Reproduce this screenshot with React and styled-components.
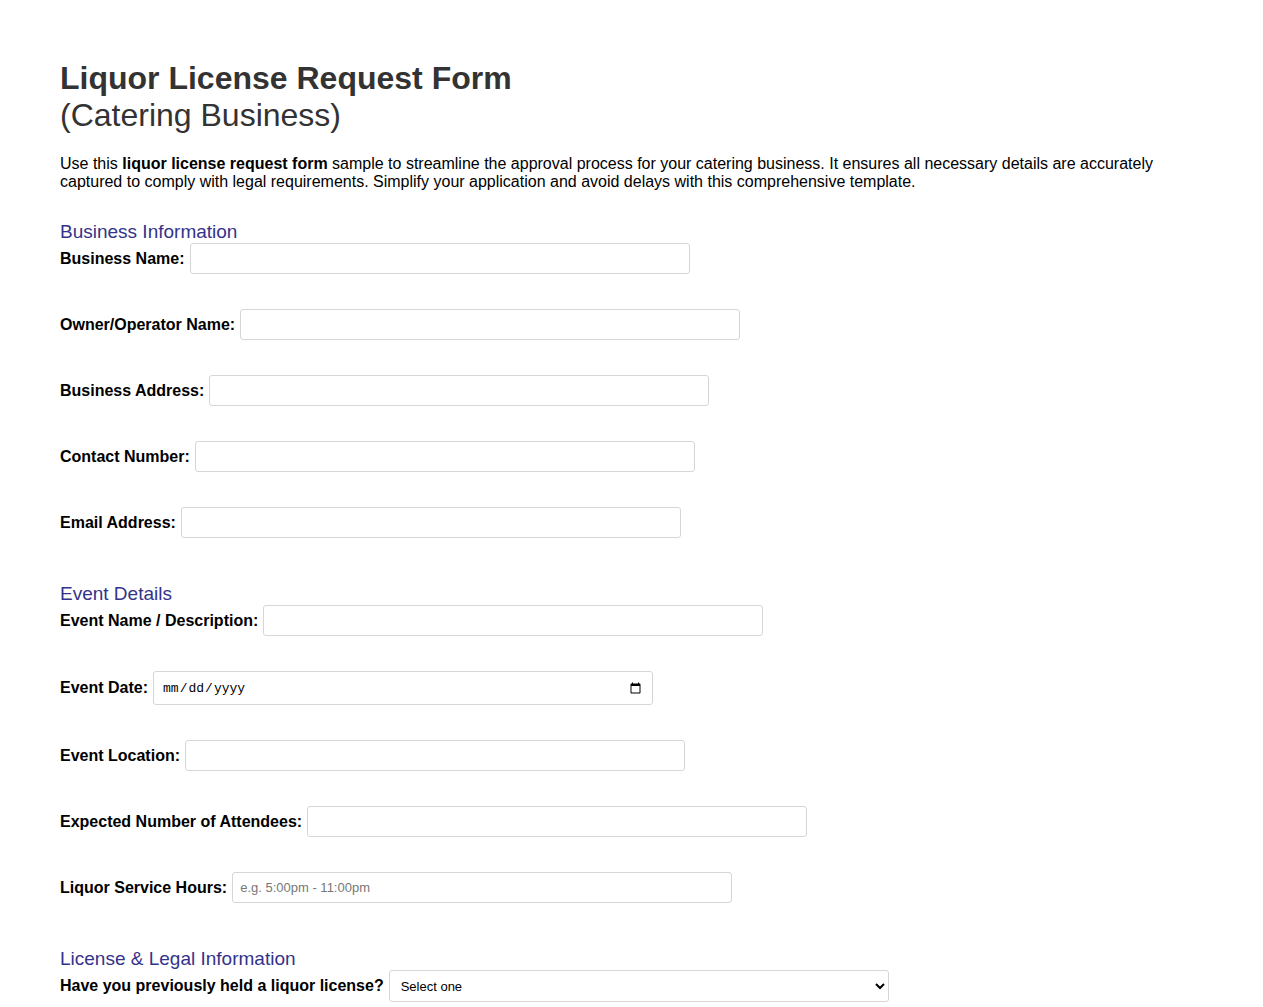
import React from "react";
import styled, { createGlobalStyle } from "styled-components";

const GlobalStyle = createGlobalStyle`
  html, body {
    margin: 0;
    padding: 0;
    background: #fff;
  }
  body {
    font-family: "Liberation Sans", Arial, sans-serif;
    color: #000;
  }
`;

const Page = styled.div`
  padding: 60px 60px 40px;
`;

const Title = styled.h1`
  margin: 0;
  font-size: 32px;
  line-height: 37px;
  font-weight: bold;
  color: #333;
  span {
    display: block;
    font-weight: normal;
  }
`;

const Intro = styled.p`
  margin: 21px 0 0;
  font-size: 16px;
  line-height: 18px;
`;

// margin-top collapses with the previous row's 35px bottom margin
const Section = styled.section`
  margin-top: ${(p) => p.$top || 0}px;
`;

const SectionTitle = styled.h2`
  margin: 0;
  font-size: 19px;
  line-height: 23px;
  font-weight: normal;
  color: #33338a;
`;

const Row = styled.div`
  display: flex;
  align-items: center;
  margin-bottom: 35px;
`;

const Label = styled.label`
  font-size: 16px;
  line-height: 18px;
  font-weight: bold;
  margin-right: 5px;
  white-space: nowrap;
`;

const Input = styled.input`
  box-sizing: border-box;
  width: 500px;
  height: ${(p) => (p.type === "date" ? 34 : 31)}px;
  padding: 0 ${(p) => (p.type === "date" ? 8 : 7)}px;
  border: 1px solid #d6d6d6;
  border-radius: 3px;
  font-size: 13px;
  font-family: ${(p) =>
    p.type === "date"
      ? `"Liberation Mono", "DejaVu Sans Mono", monospace`
      : `"Liberation Sans", Arial, sans-serif`};
  background: #fff;
  &::placeholder {
    color: #777;
  }
`;

const Select = styled.select`
  box-sizing: border-box;
  width: 500px;
  height: 32px;
  padding: 0 7px;
  border: 1px solid #d6d6d6;
  border-radius: 3px;
  font-size: 13px;
  font-family: "Liberation Sans", Arial, sans-serif;
  background: #fff;
  color: #000;
`;

function Field({ label, children }) {
  return (
    <Row>
      <Label>{label}</Label>
      {children}
    </Row>
  );
}

export default function App() {
  return (
    <Page>
      <GlobalStyle />
      <Title>
        Liquor License Request Form
        <span>(Catering Business)</span>
      </Title>
      <Intro>
        Use this <b>liquor license request form</b> sample to streamline the
        approval process for your catering business. It ensures all necessary
        details are accurately captured to comply with legal requirements.
        Simplify your application and avoid delays with this comprehensive
        template.
      </Intro>

      <Section $top={29}>
        <SectionTitle>Business Information</SectionTitle>
        <Field label="Business Name:">
          <Input type="text" />
        </Field>
        <Field label="Owner/Operator Name:">
          <Input type="text" />
        </Field>
        <Field label="Business Address:">
          <Input type="text" />
        </Field>
        <Field label="Contact Number:">
          <Input type="tel" />
        </Field>
        <Field label="Email Address:">
          <Input type="email" />
        </Field>
      </Section>

      <Section $top={44}>
        <SectionTitle>Event Details</SectionTitle>
        <Field label="Event Name / Description:">
          <Input type="text" />
        </Field>
        <Field label="Event Date:">
          <Input type="date" />
        </Field>
        <Field label="Event Location:">
          <Input type="text" />
        </Field>
        <Field label="Expected Number of Attendees:">
          <Input type="number" />
        </Field>
        <Field label="Liquor Service Hours:">
          <Input type="text" placeholder="e.g. 5:00pm - 11:00pm" />
        </Field>
      </Section>

      <Section $top={44}>
        <SectionTitle>License &amp; Legal Information</SectionTitle>
        <Field label="Have you previously held a liquor license?">
          <Select defaultValue="">
            <option value="">Select one</option>
            <option value="yes">Yes</option>
            <option value="no">No</option>
          </Select>
        </Field>
      </Section>
    </Page>
  );
}
